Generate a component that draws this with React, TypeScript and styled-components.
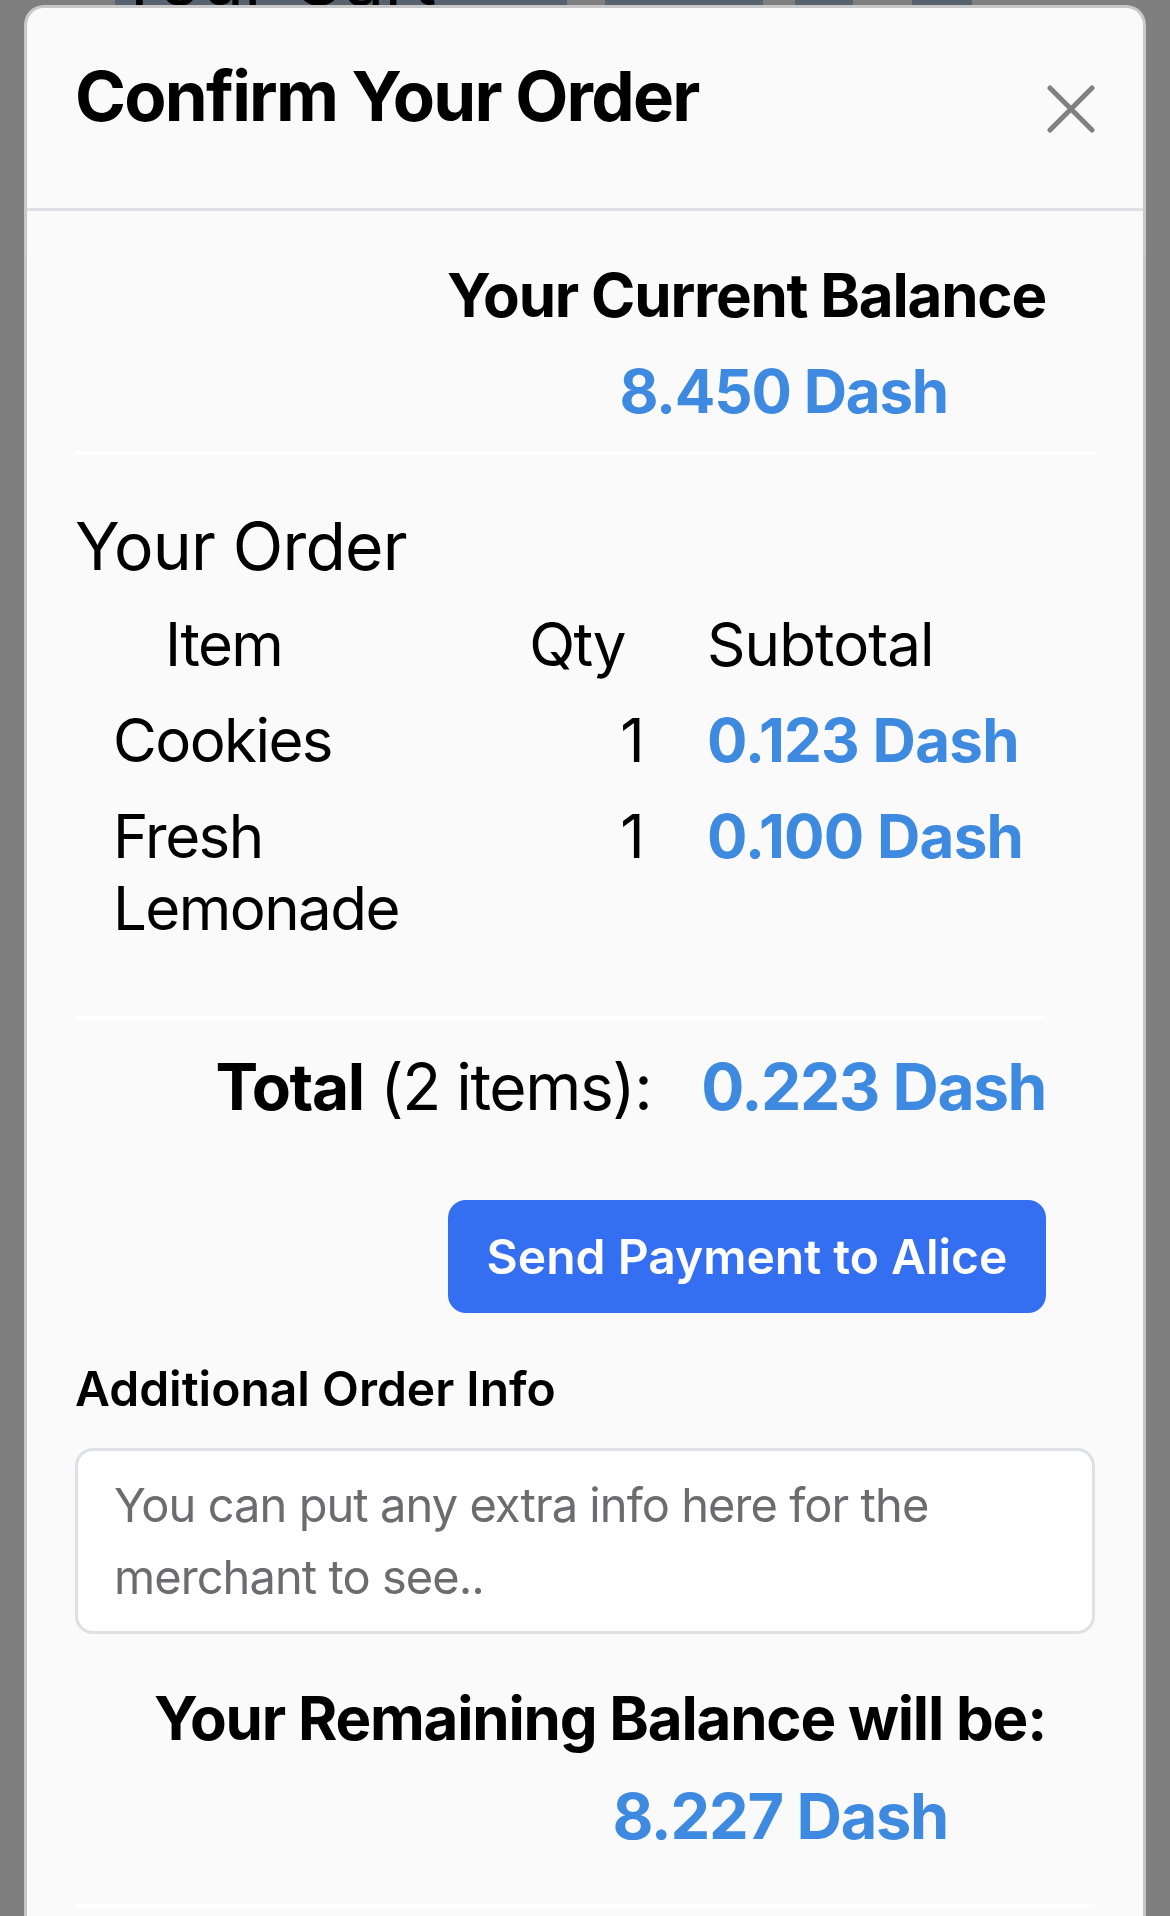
import * as React from 'react';
import styled, { createGlobalStyle } from 'styled-components';

const BLUE = '#3e8ae0';

const GlobalStyle = createGlobalStyle`
	html, body {
		margin: 0;
		padding: 0;
	}
	body {
		background: #ffffff;
		font-family: Inter, "Noto Sans", sans-serif;
		color: #000;
		overflow: hidden;
	}
`;

// the cart page that sits behind the dialog; only its very top shows
const Page = styled.div`
	height: 1916px;
	background: #ffffff;
`;

const CartBand = styled.div`
	display: flex;
	height: 7px;
	overflow: hidden;
	padding-left: 115px;
`;

const BandSegment = styled.div<{ $w: number; $light?: boolean }>`
	flex: 0 0 ${p => p.$w}px;
	background: ${p => (p.$light ? '#ffffff' : '#acc6dc')};
	display: flex;
	align-items: flex-end;
	overflow: hidden;
`;

const CartHeading = styled.span`
	font-size: 72px;
	line-height: 1;
	font-weight: 400;
	white-space: nowrap;
	margin-bottom: -8px;
`;

const Backdrop = styled.div`
	position: fixed;
	inset: 0;
	background: rgba(0, 0, 0, 0.5);
	display: flex;
	flex-direction: column;
	align-items: stretch;
`;

const Dialog = styled.div`
	margin: 5px 24px 0;
	background: #fafafa;
	border: 3px solid rgba(0, 0, 0, 0.2);
	border-bottom: none;
	border-radius: 20px 20px 0 0;
	flex: 1;
	overflow: hidden;
`;

const Header = styled.div`
	display: flex;
	justify-content: space-between;
	align-items: flex-start;
	padding: 47px 48px 70px;
	border-bottom: 3px solid #dee2e6;
`;

const Title = styled.h4`
	margin: 0;
	font-size: 69px;
	line-height: 83px;
	font-weight: 700;
	letter-spacing: -0.026em;
`;

const CloseButton = styled.button`
	width: 48px;
	height: 48px;
	margin-top: 30px;
	padding: 0;
	border: none;
	background: transparent;
	cursor: pointer;
	display: flex;
`;

const Body = styled.div`
	padding: 0 48px;
`;

const Heading = styled.div<{ $size: number; $lh: number; $mt: number; $pr?: number; $weight?: number; $track?: number }>`
	margin-top: ${p => p.$mt}px;
	padding-right: ${p => p.$pr ?? 0}px;
	text-align: ${p => (p.$pr !== undefined ? 'right' : 'left')};
	font-size: ${p => p.$size}px;
	line-height: ${p => p.$lh}px;
	font-weight: ${p => p.$weight ?? 700};
	letter-spacing: ${p => p.$track ?? -0.02}em;
`;

const Amount = styled.div<{ $size: number; $lh: number; $mt: number; $pr: number }>`
	margin-top: ${p => p.$mt}px;
	padding-right: ${p => p.$pr}px;
	text-align: right;
	font-size: ${p => p.$size}px;
	line-height: ${p => p.$lh}px;
	font-weight: 700;
	letter-spacing: -0.02em;
	color: ${BLUE};
`;

const Divider = styled.hr<{ $mt: number; $mr?: number }>`
	margin: ${p => p.$mt}px ${p => p.$mr ?? 0}px 0 0;
	border: none;
	height: 4px;
	background: #ffffff;
`;

const OrderTable = styled.div`
	margin-top: 10px;
`;

const TableRow = styled.div`
	display: grid;
	grid-template-columns: 380px 200px 1fr;
	padding: 12px 0;
	font-size: 60px;
	line-height: 72px;
	letter-spacing: -0.026em;
`;

const ItemCell = styled.div<{ $head?: boolean }>`
	padding-left: ${p => (p.$head ? 90 : 38)}px;
`;

const QtyCell = styled.div<{ $head?: boolean }>`
	text-align: right;
	padding-right: ${p => (p.$head ? 30 : 12)}px;
`;

const SubtotalCell = styled.div<{ $amount?: boolean }>`
	padding-left: 52px;
	font-weight: ${p => (p.$amount ? 700 : 400)};
	color: ${p => (p.$amount ? BLUE : '#000')};
	letter-spacing: ${p => (p.$amount ? -0.012 : -0.015)}em;
	white-space: nowrap;
`;

const TotalRow = styled.div`
	margin-top: 28px;
	padding-right: 49px;
	display: flex;
	justify-content: flex-end;
	align-items: baseline;
	gap: 50px;
	font-size: 64px;
	line-height: 77px;
	letter-spacing: -0.022em;
`;

const TotalLabel = styled.span`
	b {
		font-weight: 700;
	}
`;

const TotalAmount = styled.span`
	font-weight: 700;
	color: ${BLUE};
`;

const ButtonRow = styled.div`
	margin-top: 75px;
	padding-right: 49px;
	display: flex;
	justify-content: flex-end;
`;

const SendButton = styled.button`
	width: 598px;
	padding: 20px 0;
	border: none;
	border-radius: 18px;
	background: #346ff2;
	color: #fff;
	font-family: Inter, "Noto Sans", sans-serif;
	font-size: 48px;
	line-height: 73px;
	font-weight: 600;
	cursor: pointer;
`;

const InfoField = styled.textarea`
	display: block;
	box-sizing: border-box;
	width: 100%;
	height: 186px;
	margin-top: 30px;
	padding: 18px 36px;
	border: 3px solid #dfe0e5;
	border-radius: 18px;
	background: #ffffff;
	font-family: Inter, "Noto Sans", sans-serif;
	font-size: 47px;
	line-height: 72px;
	letter-spacing: -0.02em;
	resize: none;
	outline: none;
	&::placeholder {
		color: #6b6b70;
	}
`;

type OrderLine = { name: string; qty: number; subtotal: string };

const lines: OrderLine[] = [
	{ name: 'Cookies', qty: 1, subtotal: '0.123 Dash' },
	{ name: 'Fresh Lemonade', qty: 1, subtotal: '0.100 Dash' },
];

const CloseIcon = () => (
	<svg width="48" height="48" viewBox="0 0 48 48">
		<path d="M3 3 L45 45 M45 3 L3 45" stroke="#808080" strokeWidth="5" strokeLinecap="round" fill="none" />
	</svg>
);

export default function App() {
	return (
		<>
			<GlobalStyle />
			<Page>
				<CartBand>
					<BandSegment $w={452}>
						<CartHeading>Your Cart</CartHeading>
					</BandSegment>
					<BandSegment $w={38} $light />
					<BandSegment $w={158} />
					<BandSegment $w={32} $light />
					<BandSegment $w={58} />
					<BandSegment $w={59} $light />
					<BandSegment $w={60} />
				</CartBand>
			</Page>
			<Backdrop>
				<Dialog>
					<Header>
						<Title>Confirm Your Order</Title>
						<CloseButton aria-label="Close">
							<CloseIcon />
						</CloseButton>
					</Header>
					<Body>
						<Heading $size={60} $lh={72} $mt={48} $pr={49}>Your Current Balance</Heading>
						<Amount $size={60} $lh={72} $mt={24} $pr={147}>8.450 Dash</Amount>
						<Divider $mt={24} />

						<Heading $size={66} $lh={80} $mt={51} $weight={400} $track={-0.012}>Your Order</Heading>
						<OrderTable>
							<TableRow>
								<ItemCell $head>Item</ItemCell>
								<QtyCell $head>Qty</QtyCell>
								<SubtotalCell>Subtotal</SubtotalCell>
							</TableRow>
							{lines.map(line => (
								<TableRow key={line.name}>
									<ItemCell>{line.name}</ItemCell>
									<QtyCell>{line.qty}</QtyCell>
									<SubtotalCell $amount>{line.subtotal}</SubtotalCell>
								</TableRow>
							))}
						</OrderTable>
						<Divider $mt={60} $mr={49} />

						<TotalRow>
							<TotalLabel><b>Total</b> (2 items):</TotalLabel>
							<TotalAmount>0.223 Dash</TotalAmount>
						</TotalRow>

						<ButtonRow>
							<SendButton>Send Payment to Alice</SendButton>
						</ButtonRow>

						<Heading $size={48} $lh={58} $mt={47} $weight={600} $track={0}>Additional Order Info</Heading>
						<InfoField placeholder="You can put any extra info here for the merchant to see.." />

						<Heading $size={60} $lh={72} $mt={48} $pr={49}>Your Remaining Balance will be:</Heading>
						<Amount $size={63} $lh={76} $mt={24} $pr={147}>8.227 Dash</Amount>
						<Divider $mt={50} />
					</Body>
				</Dialog>
			</Backdrop>
		</>
	);
}
